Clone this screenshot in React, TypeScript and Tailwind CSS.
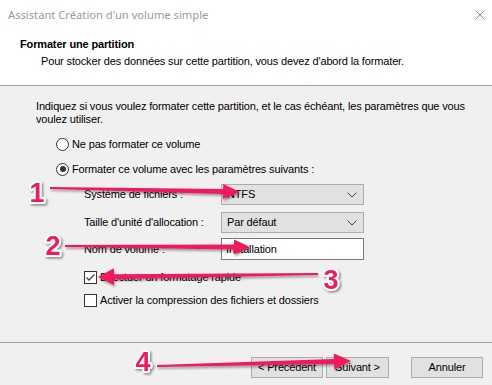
import React from "react";

const PINK = "#ee1a5d";

function arrowPoints(
  x0: number,
  y0: number,
  x1: number,
  y1: number,
  w0: number,
  w1: number,
  hl: number,
  hw: number
) {
  const dx = x1 - x0;
  const dy = y1 - y0;
  const L = Math.hypot(dx, dy);
  const ux = dx / L;
  const uy = dy / L;
  const nx = -uy;
  const ny = ux;
  const bx = x1 - ux * hl;
  const by = y1 - uy * hl;
  const p = [
    [x0 + (nx * w0) / 2, y0 + (ny * w0) / 2],
    [bx + (nx * w1) / 2, by + (ny * w1) / 2],
    [bx + nx * hw, by + ny * hw],
    [x1, y1],
    [bx - nx * hw, by - ny * hw],
    [bx - (nx * w1) / 2, by - (ny * w1) / 2],
    [x0 - (nx * w0) / 2, y0 - (ny * w0) / 2],
  ];
  return p.map((q) => q.map((v) => v.toFixed(1)).join(",")).join(" ");
}

const arrows = [
  { a: [50, 188, 240, 192], hl: 17, hw: 7.5 },
  { a: [65, 246, 250, 247], hl: 16, hw: 7.5 },
  { a: [318, 274, 98, 277], hl: 16, hw: 8.5 },
  { a: [157, 366, 351, 361], hl: 17, hw: 8 },
];

const nums = [
  { t: "1", x: 37, y: 202 },
  { t: "2", x: 53, y: 255 },
  { t: "3", x: 331, y: 289 },
  { t: "4", x: 143, y: 371 },
];

function Chevron() {
  return (
    <svg width="10" height="6" viewBox="0 0 10 6" className="absolute right-[6px] top-[7px]">
      <polyline points="0.5,0.5 5,5 9.5,0.5" fill="none" stroke="#444" strokeWidth="1" />
    </svg>
  );
}

function Radio({ checked, label }: { checked?: boolean; label: string }) {
  return (
    <div className="flex items-center h-[16px]">
      <div className="ml-[56px] w-[13px] h-[13px] rounded-full border border-[#333] bg-white flex items-center justify-center">
        {checked && <div className="w-[6px] h-[6px] rounded-full bg-[#333]" />}
      </div>
      <span className="ml-[3px]">{label}</span>
    </div>
  );
}

function Check({ checked, label }: { checked?: boolean; label: string }) {
  return (
    <div className="flex items-center h-[13px]">
      <div className="ml-[84px] w-[13px] h-[13px] border border-[#333] bg-white flex items-center justify-center">
        {checked && (
          <svg width="11" height="11" viewBox="0 0 11 11">
            <polyline points="1.5,5.5 4,8 9.5,2.5" fill="none" stroke="#444" strokeWidth="1.3" />
          </svg>
        )}
      </div>
      <span className="ml-[3px]">{label}</span>
    </div>
  );
}

export default function App() {
  return (
    <div
      className="relative w-[492px] h-[385px] overflow-hidden bg-[#f0f0f0] text-[11px] tracking-[-0.15px] text-black"
      style={{ fontFamily: '"Liberation Sans", Arial, sans-serif' }}
    >
      {/* title bar */}
      <div className="h-[30px] bg-white flex items-center justify-between pl-[8px] pr-[7px]">
        <span
          className="text-[11.2px] tracking-normal text-[#9a9a9a]"
          style={{ fontFamily: '"Noto Sans", sans-serif' }}
        >
          Assistant Création d'un volume simple
        </span>
        <svg width="10" height="10" viewBox="0 0 10 10">
          <line x1="0.5" y1="0.5" x2="9.5" y2="9.5" stroke="#8a8a8a" strokeWidth="1" />
          <line x1="9.5" y1="0.5" x2="0.5" y2="9.5" stroke="#8a8a8a" strokeWidth="1" />
        </svg>
      </div>
      {/* header */}
      <div className="h-[56px] bg-white border-b border-[#a0a0a0] pt-[7px]">
        <div className="pl-[20px] font-bold leading-[14px]">Formater une partition</div>
        <div className="pl-[41px] leading-[14px] mt-[3px]">
          Pour stocker des données sur cette partition, vous devez d'abord la formater.
        </div>
      </div>
      {/* body */}
      <div className="flex flex-col">
        <p className="pl-[36px] pr-[10px] mt-[14px] leading-[13px]">
          Indiquez si vous voulez formater cette partition, et le cas échéant, les paramètres que vous voulez utiliser.
        </p>
        <div className="mt-[10px]">
          <Radio label="Ne pas formater ce volume" />
        </div>
        <div className="mt-[9px]">
          <Radio checked label="Formater ce volume avec les paramètres suivants :" />
        </div>
        <div className="mt-[7px] flex items-center h-[21px]">
          <span className="ml-[84px] w-[137px]">Système de fichiers :</span>
          <div className="relative w-[143px] h-[21px] bg-[#e1e1e1] border border-[#adadad] pl-[5px] flex items-center">
            NTFS
            <Chevron />
          </div>
        </div>
        <div className="mt-[7px] flex items-center h-[21px]">
          <span className="ml-[84px] w-[137px]">Taille d'unité d'allocation :</span>
          <div className="relative w-[143px] h-[21px] bg-[#e1e1e1] border border-[#adadad] pl-[5px] flex items-center">
            Par défaut
            <Chevron />
          </div>
        </div>
        <div className="mt-[5px] flex items-center h-[22px]">
          <span className="ml-[84px] w-[137px]">Nom de volume :</span>
          <div className="w-[143px] h-[22px] bg-white border border-[#7a7a7a] pl-[4px] flex items-center">
            Installation
          </div>
        </div>
        <div className="mt-[11px]">
          <Check checked label="Effectuer un formatage rapide" />
        </div>
        <div className="mt-[10px]">
          <Check label="Activer la compression des fichiers et dossiers" />
        </div>
      </div>
      {/* footer */}
      <div className="absolute left-0 right-0 top-[342px] border-t border-[#a0a0a0]">
        <div className="flex mt-[14px]">
          <div className="ml-[251px] w-[72px] h-[21px] bg-[#e1e1e1] border border-[#adadad] flex items-center justify-center">
            &lt; Précédent
          </div>
          <div className="ml-[3px] w-[63px] h-[21px] bg-[#e1e1e1] border border-[#adadad] flex items-center justify-center">
            Suivant &gt;
          </div>
          <div className="ml-[22px] w-[72px] h-[21px] bg-[#e1e1e1] border border-[#adadad] flex items-center justify-center">
            Annuler
          </div>
        </div>
      </div>
      {/* annotations */}
      <svg className="absolute inset-0 pointer-events-none" width="492" height="385" viewBox="0 0 492 385">
        <defs>
          <filter id="sh" x="-20%" y="-50%" width="140%" height="200%">
            <feDropShadow dx="1" dy="2" stdDeviation="1" floodColor="#000" floodOpacity="0.35" />
          </filter>
          <filter id="sh2" x="-50%" y="-50%" width="200%" height="200%">
            <feDropShadow dx="1.5" dy="1.5" stdDeviation="1" floodColor="#000" floodOpacity="0.45" />
          </filter>
        </defs>
        {arrows.map((ar, i) => (
          <polygon
            key={i}
            points={arrowPoints(ar.a[0], ar.a[1], ar.a[2], ar.a[3], 2, 5, ar.hl, ar.hw)}
            fill={PINK}
            filter="url(#sh)"
          />
        ))}
        {nums.map((n) => (
          <text
            key={n.t}
            x={n.x}
            y={n.y}
            textAnchor="middle"
            fontSize="27"
            fontWeight="bold"
            fontFamily='"Liberation Sans", Arial, sans-serif'
            fill={PINK}
            stroke="#fff"
            strokeWidth="4"
            strokeLinejoin="round"
            paintOrder="stroke"
            filter="url(#sh2)"
          >
            {n.t}
          </text>
        ))}
      </svg>
    </div>
  );
}
